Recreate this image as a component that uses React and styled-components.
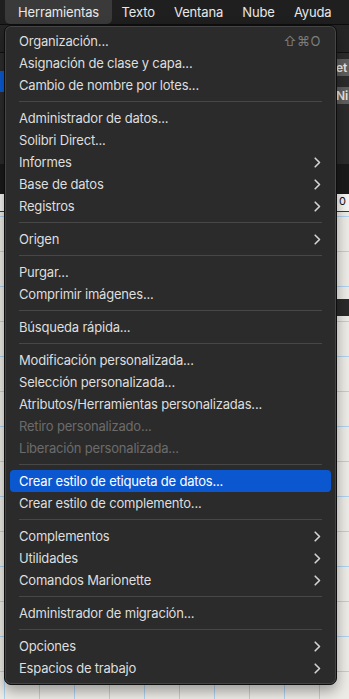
import React from 'react';
import styled, { createGlobalStyle } from 'styled-components';

const GlobalStyle = createGlobalStyle`
  html, body { margin: 0; padding: 0; }
  body {
    font-family: Inter, "Noto Sans", "Liberation Sans", sans-serif;
    -webkit-font-smoothing: antialiased;
  }
`;

const Page = styled.div`
  position: relative;
  width: 349px;
  height: 699px;
  overflow: hidden;
  display: flex;
  flex-direction: column;
  background: #edece7;
`;

const MenuBar = styled.div`
  height: 24px;
  flex: none;
  display: flex;
  align-items: stretch;
  padding-left: 5px;
  background: #1f1f1f;
  border-bottom: 1px solid #0e0e0e;
`;

const BarItem = styled.div`
  display: flex;
  align-items: center;
  padding: 0 ${p => (p.$active ? '13px' : '9.6px')};
  border-radius: 0 0 5px 5px;
  background: ${p => (p.$active ? '#3a3a3a' : 'transparent')};
  color: #e8e8e8;
  font-size: 13px;
  letter-spacing: -0.15px;
`;

const Band = styled.div`
  flex: none;
  height: ${p => p.$h}px;
  background: ${p => p.$bg};
  border-bottom: ${p => (p.$line ? `1px solid ${p.$line}` : 'none')};
  display: flex;
  align-items: center;
  justify-content: space-between;
`;

const EdgeTag = styled.div`
  width: 4px;
  height: ${p => p.$h}px;
  background: ${p => p.$bg};
`;

const LabelStack = styled.div`
  display: flex;
  flex-direction: column;
  gap: 11px;
`;

const SideLabel = styled.div`
  width: 14px;
  height: 17px;
  background: #5f5f5f;
  color: #e6e6e6;
  font-size: 12px;
  font-weight: 600;
  line-height: 17px;
  overflow: hidden;
  white-space: nowrap;
  text-indent: 1px;
`;

const Ruler = styled.div`
  flex: none;
  height: 17px;
  background: #f6f6f4;
  border-bottom: 1px solid #3a3a3a;
  display: flex;
  justify-content: flex-end;
  font-size: 11px;
  color: #111;
  padding-right: 3px;
  line-height: 15px;
`;

const Canvas = styled.div`
  flex: 1;
  display: flex;
  flex-direction: column;
  align-items: flex-end;
  padding-top: 87px;
  background-color: #edece7;
  background-image:
    linear-gradient(to right, #afd2ee 1px, transparent 1px),
    linear-gradient(to bottom, #afd2ee 1px, transparent 1px);
  background-size: 35px 35px;
  background-position: 4px 4px;
`;

const CanvasPanel = styled.div`
  width: 12px;
  height: 17px;
  background: #2a2a2a;
`;

const Menu = styled.div`
  position: absolute;
  top: 25px;
  left: 4px;
  width: 333px;
  box-sizing: border-box;
  padding: 4px 5px 5px;
  background: #2b2b2b;
  border: 1px solid #0d0d0d;
  border-radius: 7px;
  box-shadow: inset 0 0 0 1px #454545, 0 6px 14px rgba(0, 0, 0, 0.35);
  display: flex;
  flex-direction: column;
`;

const Item = styled.div`
  height: 22px;
  display: flex;
  align-items: center;
  justify-content: space-between;
  padding: 0 10px 0 9px;
  border-radius: 4px;
  font-size: 13px;
  letter-spacing: -0.2px;
  color: ${p => (p.$disabled ? '#6b6b6b' : '#dedede')};
  background: ${p => (p.$selected ? '#0b57d0' : 'transparent')};
  ${p => p.$selected && 'color: #ffffff;'}
  white-space: nowrap;
`;

const Shortcut = styled.span`
  color: #7d7d7d;
  font-size: 13px;
  letter-spacing: 0.5px;
`;

const Separator = styled.div`
  height: 1px;
  margin: 5px 9px;
  background: #474747;
`;

const Chevron = () => (
  <svg width="7" height="11" viewBox="0 0 7 11" fill="none">
    <path d="M1.2 1.2 L5.5 5.5 L1.2 9.8" stroke="#d4d4d4" strokeWidth="1.6" strokeLinecap="round" strokeLinejoin="round" />
  </svg>
);

const groups = [
  [
    { label: 'Organización...', shortcut: '⇧⌘O' },
    { label: 'Asignación de clase y capa...' },
    { label: 'Cambio de nombre por lotes...' },
  ],
  [
    { label: 'Administrador de datos...' },
    { label: 'Solibri Direct...' },
    { label: 'Informes', sub: true },
    { label: 'Base de datos', sub: true },
    { label: 'Registros', sub: true },
  ],
  [{ label: 'Origen', sub: true }],
  [{ label: 'Purgar...' }, { label: 'Comprimir imágenes...' }],
  [{ label: 'Búsqueda rápida...' }],
  [
    { label: 'Modificación personalizada...' },
    { label: 'Selección personalizada...' },
    { label: 'Atributos/Herramientas personalizadas...' },
    { label: 'Retiro personalizado...', disabled: true },
    { label: 'Liberación personalizada...', disabled: true },
  ],
  [
    { label: 'Crear estilo de etiqueta de datos...', selected: true },
    { label: 'Crear estilo de complemento...' },
  ],
  [
    { label: 'Complementos', sub: true },
    { label: 'Utilidades', sub: true },
    { label: 'Comandos Marionette', sub: true },
  ],
  [{ label: 'Administrador de migración...' }],
  [{ label: 'Opciones', sub: true }, { label: 'Espacios de trabajo', sub: true }],
];

export default function App() {
  return (
    <Page>
      <GlobalStyle />
      <MenuBar>
        <BarItem $active>Herramientas</BarItem>
        <BarItem>Texto</BarItem>
        <BarItem>Ventana</BarItem>
        <BarItem>Nube</BarItem>
        <BarItem>Ayuda</BarItem>
      </MenuBar>

      <Band $h={27} $bg="#262626" $line="#111" />
      <Band $h={56} $bg="#2c2c2c">
        <EdgeTag $h={21} $bg="#0b5bd6" />
        <LabelStack>
          <SideLabel>et</SideLabel>
          <SideLabel>Ni</SideLabel>
        </LabelStack>
      </Band>
      <Band $h={55} $bg="#2b2b2b" />
      <Band $h={30} $bg="#1a1a1a" />
      <Ruler>0</Ruler>
      <Canvas>
        <CanvasPanel />
      </Canvas>

      <Menu>
        {groups.map((group, gi) => (
          <React.Fragment key={gi}>
            {gi > 0 && <Separator />}
            {group.map(it => (
              <Item key={it.label} $disabled={it.disabled} $selected={it.selected}>
                <span>{it.label}</span>
                {it.shortcut && <Shortcut>{it.shortcut}</Shortcut>}
                {it.sub && <Chevron />}
              </Item>
            ))}
          </React.Fragment>
        ))}
      </Menu>
    </Page>
  );
}
